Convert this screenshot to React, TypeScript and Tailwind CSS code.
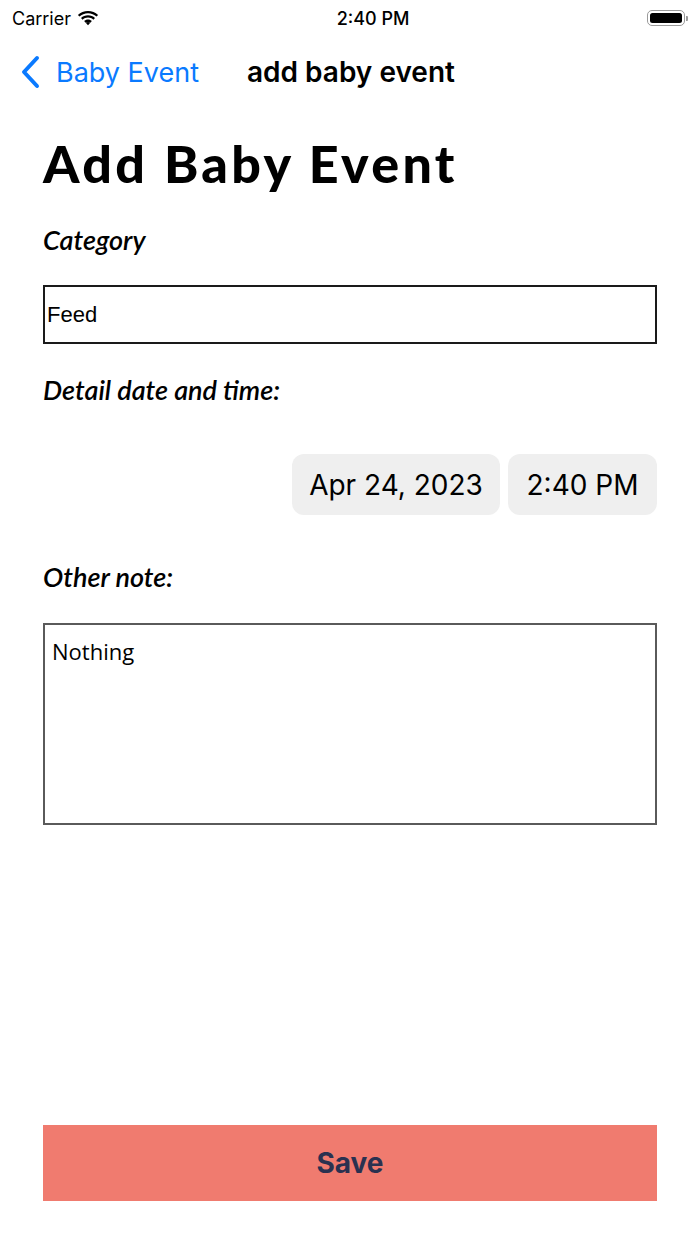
const gill = { fontFamily: '"Lato", "Open Sans", sans-serif' };

const StatusBar = () => (
  <div className="flex h-[36px] items-center justify-between px-[12px] font-['Inter',sans-serif] text-black">
    <div className="flex items-center gap-[6px]">
      <span className="text-[18px]">Carrier</span>
      <svg width="22" height="16" viewBox="0 0 22 16">
        <path d="M11 3.2c3.3 0 6.3 1.3 8.5 3.4l1.6-1.7C18.5 2.4 14.9.9 11 .9S3.5 2.4.9 4.9l1.6 1.7C4.7 4.5 7.7 3.2 11 3.2z" fill="#000" />
        <path d="M11 7.6c2.1 0 4 .8 5.4 2.1l1.6-1.7C16.2 6.3 13.7 5.3 11 5.3S5.8 6.3 4 8l1.6 1.7C7 8.4 8.9 7.6 11 7.6z" fill="#000" />
        <path d="M11 11.9c.9 0 1.7.3 2.3.9L11 15.2l-2.3-2.4c.6-.6 1.4-.9 2.3-.9z" fill="#000" />
        <path d="M11 9.6c1.5 0 2.9.6 3.9 1.5l-1.6 1.7c-.6-.6-1.4-.9-2.3-.9s-1.7.3-2.3.9L7.1 11.1c1-.9 2.4-1.5 3.9-1.5z" fill="#000" />
      </svg>
    </div>
    <span className="text-[18px] font-medium">2:40 PM</span>
    <div className="flex items-center">
      <div className="flex h-[16px] w-[38px] items-center rounded-[5px] border-[1.5px] border-[#9a9a9a] p-[2px]">
        <div className="h-full w-full rounded-[2.5px] bg-black" />
      </div>
      <div className="ml-[1px] h-[5px] w-[2px] rounded-r-[1px] bg-[#9a9a9a]" />
    </div>
  </div>
);

const NavBar = () => (
  <div className="flex h-[72px] items-center font-['Inter',sans-serif]">
    <div className="flex items-center pl-[20px] text-[#0a7aff]">
      <svg width="22" height="34" viewBox="0 0 22 34" fill="none">
        <path d="M17 3L4 17l13 14" stroke="#0a7aff" strokeWidth="4" strokeLinecap="round" strokeLinejoin="round" />
      </svg>
      <span className="ml-[14px] text-[27px] leading-none">Baby Event</span>
    </div>
    <span className="ml-[48px] text-[28px] font-semibold leading-none text-black">add baby event</span>
  </div>
);

export default function App() {
  return (
    <div className="flex h-[1244px] w-[700px] flex-col bg-white">
      <StatusBar />
      <NavBar />
      <div className="flex flex-1 flex-col px-[43px]">
        <h1 className="mt-[25px] text-[52px] font-black leading-[60px] tracking-[3.3px] text-black" style={gill}>
          Add Baby Event
        </h1>
        <label className="mt-[31px] text-[27px] font-semibold italic leading-[32px] text-black" style={gill}>
          Category
        </label>
        <div className="mt-[29px] flex h-[59px] items-center border-2 border-[#1a1a1a] px-[2px]">
          <span className="font-['Liberation_Sans',sans-serif] text-[22px] text-black">Feed</span>
        </div>
        <label className="mt-[30px] text-[27px] font-semibold italic leading-[32px] text-black" style={gill}>
          Detail date and time:
        </label>
        <div className="mt-[48px] flex justify-end gap-[8px] font-['Inter',sans-serif]">
          <div className="flex h-[61px] w-[208px] items-center justify-center rounded-[12px] bg-[#efefef] text-[28px] text-black">
            Apr 24, 2023
          </div>
          <div className="flex h-[61px] w-[149px] items-center justify-center rounded-[12px] bg-[#efefef] text-[28px] text-black">
            2:40 PM
          </div>
        </div>
        <label className="mt-[46px] text-[27px] font-semibold italic leading-[32px] text-black" style={gill}>
          Other note:
        </label>
        <div className="mt-[30px] h-[202px] border-2 border-[#5a5a5a] px-[7px] py-[10px]">
          <span className="font-['Open_Sans',sans-serif] text-[22px] text-black">Nothing</span>
        </div>
        <div className="flex-1" />
        <button className="mb-[43px] flex h-[76px] items-center justify-center bg-[#f07b6f] font-['Inter',sans-serif] text-[28px] font-bold text-[#2a3150]">
          Save
        </button>
      </div>
    </div>
  );
}
